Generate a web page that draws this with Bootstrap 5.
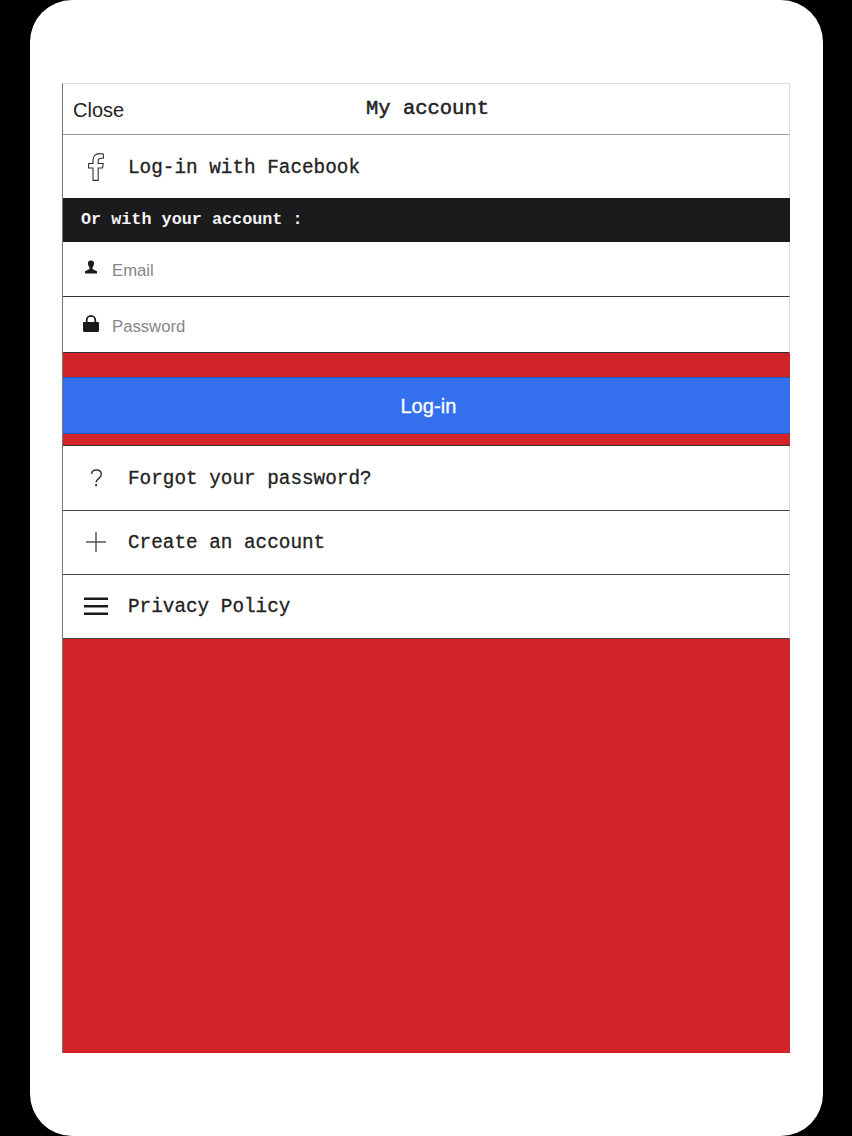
<!DOCTYPE html>
<html lang="en">
<head>
    <meta charset="UTF-8">
    <meta name="viewport" content="width=device-width, initial-scale=1.0">
    <title>My account</title>
    <link href="https://cdn.jsdelivr.net/npm/bootstrap@5.3.0/dist/css/bootstrap.min.css" rel="stylesheet">
    <style>
        html, body {
            height: 100%;
        }
        body {
            background-color: #000;
            font-family: "Liberation Sans", Arial, sans-serif;
            padding: 0 29px 0 30px;
        }
        .device {
            height: 1136px;
            background-color: #fff;
            border-radius: 42px;
            padding: 83px 33px 83px 32px;
        }
        .screen {
            height: 970px;
            background-color: #d12428;
            border-left: 1px solid #777;
            border-top: 1px solid #ddd;
        }
        .mono {
            font-family: "Liberation Mono", "Courier New", monospace;
            color: #222;
            -webkit-text-stroke: 0.3px #222;
        }
        .top-bar {
            height: 51px;
            background-color: #fff;
            border-bottom: 1px solid #999;
            border-right: 1px solid #ddd;
        }
        .close-link {
            left: 10px;
            top: 15px;
            font-size: 20px;
            line-height: 23px;
            color: #222;
            text-decoration: none;
        }
        .top-title {
            font-size: 20.5px;
            -webkit-text-stroke: 0.5px #222;
            margin-top: 1px;
            padding-left: 3px;
        }
        .menu-row {
            height: 64px;
            background-color: #fff;
            border-bottom: 1px solid #444;
            border-right: 1px solid #ddd;
            font-size: 19.33px;
            text-decoration: none;
        }
        .menu-row.no-line {
            height: 63px;
            border-bottom: 0;
        }
        .menu-row.tall {
            height: 65px;
        }
        .row-label {
            margin-top: 2px;
        }
        .no-line .row-label {
            margin-top: 3px;
        }
        .row-icon {
            width: 65px;
            padding-left: 21px;
            flex-shrink: 0;
        }
        .fb-icon {
            padding-left: 25px;
        }
        .plus-icon {
            padding-left: 23px;
            padding-bottom: 2px;
        }
        .lines-icon {
            padding-bottom: 2px;
        }
        .section-bar {
            height: 44px;
            background-color: #1b1b1d;
            color: #f4f4f4;
            padding-left: 18px;
            font-size: 16.8px;
            font-weight: 700;
            -webkit-text-stroke: 0;
        }
        .field-row {
            height: 55px;
            background-color: #fff;
            border-bottom: 1px solid #333;
            border-right: 1px solid #ddd;
        }
        .field-row.tall {
            height: 56px;
        }
        .field-icon {
            width: 49px;
            padding-left: 21px;
            padding-bottom: 5px;
            flex-shrink: 0;
        }
        .lock-icon {
            padding-left: 20px;
            padding-bottom: 3px;
        }
        .field-input {
            border: 0;
            border-radius: 0;
            padding: 4px 0 0;
            font-size: 16.7px;
            box-shadow: none;
        }
        .field-input::placeholder {
            color: #85858a;
        }
        .btn-zone {
            height: 93px;
            padding: 24px 0 11px;
            border-bottom: 1px solid #333;
        }
        .btn-login {
            height: 57px;
            padding-left: 16px;
            padding-top: 7px;
            background-color: #3470ee;
            border: 0;
            border-top: 1px solid #2a52b8;
            border-bottom: 1px solid #2a52b8;
            border-radius: 0;
            font-size: 20px;
            letter-spacing: 0.1px;
            color: #fff;
            -webkit-text-stroke: 0.3px #fff;
        }
    </style>
</head>
<body>
    <div class="device">
        <div class="screen d-flex flex-column">
            <div class="top-bar position-relative d-flex align-items-center justify-content-center">
                <a href="#" class="close-link position-absolute">Close</a>
                <span class="mono top-title">My account</span>
            </div>

            <a href="#" class="menu-row no-line mono d-flex align-items-center">
                <span class="row-icon fb-icon d-flex">
                    <svg width="16" height="28" viewBox="0 0 16 28" fill="#fff" stroke="#333" stroke-width="1.1">
                        <path d="M5 27.400V15H.6v-4.500H5V7C5 3 7.500.6 11.200.6c1.700 0 3.300.2 4.200.4v4.200h-2.500c-2 0-2.700 1-2.700 2.400v2.900h5l-.7 4.500H10.200v12.400z"/>
                    </svg>
                </span>
                <span class="row-label">Log-in with Facebook</span>
            </a>

            <div class="section-bar mono d-flex align-items-center">Or with your account :</div>

            <div class="field-row d-flex align-items-center">
                <span class="field-icon d-flex">
                    <svg width="14" height="14" viewBox="0 0 14 14" fill="#1a1a1a">
                        <path d="M7 .5C4.900.5 3.900 1.800 4 3.600c.1 1.600.7 2.900 1.500 3.800v1.600L1 11.200V13.500h12v-2.300L8.500 9V7.400C9.300 6.500 9.900 5.200 10 3.600 10.100 1.800 9.100.5 7 .5z"/>
                    </svg>
                </span>
                <input type="text" class="form-control field-input" placeholder="Email">
            </div>

            <div class="field-row tall d-flex align-items-center">
                <span class="field-icon lock-icon d-flex">
                    <svg width="16" height="17" viewBox="0 0 16 17" fill="#1a1a1a">
                        <path fill-rule="evenodd" d="M1 7h1.800V5.200a5.200 5.200 0 0 1 10.400 0V7H15c.5 0 1 .4 1 1v7.500c0 .8-.6 1.500-1.500 1.500h-13C.6 17 0 16.300 0 15.500V8c0-.6.500-1 1-1zm3.600 0h6.800V5.200a3.400 3.400 0 0 0-6.800 0z"/>
                    </svg>
                </span>
                <input type="password" class="form-control field-input" placeholder="Password">
            </div>

            <div class="btn-zone">
                <button type="button" class="btn btn-login w-100">Log-in</button>
            </div>

            <a href="#" class="menu-row tall mono d-flex align-items-center">
                <span class="row-icon d-flex">
                    <svg width="24" height="20" viewBox="0 0 24 20" fill="none" stroke="#333" stroke-width="1.4">
                        <path d="M7.500 6C7.800 3.300 9.600 2 12.300 2c3 0 5 1.700 5 4.200 0 2-1 3-2.500 4.200-1.800 1.400-2.700 2.300-2.700 4.200"/>
                        <path d="M12.100 16v2.200" stroke-width="1.800"/>
                    </svg>
                </span>
                <span class="row-label">Forgot your password?</span>
            </a>

            <a href="#" class="menu-row mono d-flex align-items-center">
                <span class="row-icon plus-icon d-flex">
                    <svg width="20" height="20" viewBox="0 0 20 20" fill="none" stroke="#555" stroke-width="1.500">
                        <path d="M10 0v20M0 10h20"/>
                    </svg>
                </span>
                <span class="row-label">Create an account</span>
            </a>

            <a href="#" class="menu-row mono d-flex align-items-center">
                <span class="row-icon lines-icon d-flex">
                    <svg width="24" height="18" viewBox="0 0 24 18" stroke="#1a1a1a" stroke-width="2.500">
                        <path d="M0 1.800h24M0 9.300h24M0 16.800h24"/>
                    </svg>
                </span>
                <span class="row-label">Privacy Policy</span>
            </a>
        </div>
    </div>
    <script src="https://cdn.jsdelivr.net/npm/bootstrap@5.3.0/dist/js/bootstrap.bundle.min.js"></script>
</body>
</html>
